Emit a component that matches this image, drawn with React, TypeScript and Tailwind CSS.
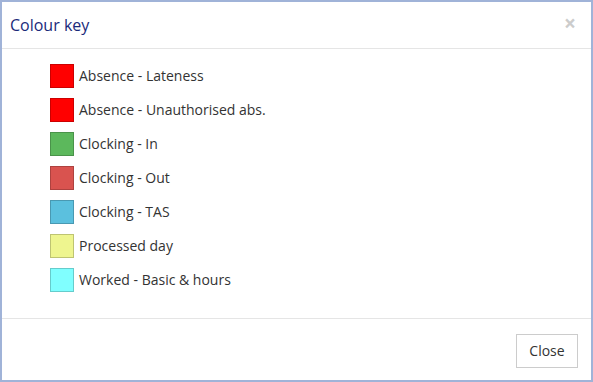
import React from "react";

const items: { label: string; bg: string; border: string }[] = [
  { label: "Absence - Lateness", bg: "bg-[#ff0000]", border: "border-[#cc0000]" },
  { label: "Absence - Unauthorised abs.", bg: "bg-[#ff0000]", border: "border-[#cc0000]" },
  { label: "Clocking - In", bg: "bg-[#5cb85c]", border: "border-[#4a934a]" },
  { label: "Clocking - Out", bg: "bg-[#d9534f]", border: "border-[#ae423f]" },
  { label: "Clocking - TAS", bg: "bg-[#5bc0de]", border: "border-[#4999b2]" },
  { label: "Processed day", bg: "bg-[#eef58f]", border: "border-[#bec472]" },
  { label: "Worked - Basic & hours", bg: "bg-[#80ffff]", border: "border-[#66cccc]" },
];

export default function App() {
  return (
    <div
      className="w-[593px] h-[382px] border-2 border-[#a0b3d8] bg-white flex flex-col text-[#333]"
      style={{ fontFamily: '"Open Sans", sans-serif' }}
    >
      <div className="h-[47px] flex items-center justify-between pl-2 pr-[15px] border-b border-[#e5e5e5] shrink-0">
        <h4 className="text-[16px] text-[#1a2a7a] leading-none">Colour key</h4>
        <span className="text-[21px] font-bold leading-none text-[#cccccc] -mt-1">×</span>
      </div>
      <div className="flex-1 pl-[48px] pt-[15px] flex flex-col gap-[10px]">
        {items.map((it) => (
          <div key={it.label} className="flex items-center h-[24px]">
            <div className={`w-[24px] h-[24px] border ${it.bg} ${it.border} shrink-0`} />
            <span className="ml-[5px] text-[14px] leading-none">{it.label}</span>
          </div>
        ))}
      </div>
      <div className="h-[62px] border-t border-[#e5e5e5] flex items-center justify-end pr-[13px] shrink-0">
        <button className="w-[62px] h-[34px] border border-[#cccccc] bg-white text-[14px] text-[#333] mt-[2px]">
          Close
        </button>
      </div>
    </div>
  );
}
